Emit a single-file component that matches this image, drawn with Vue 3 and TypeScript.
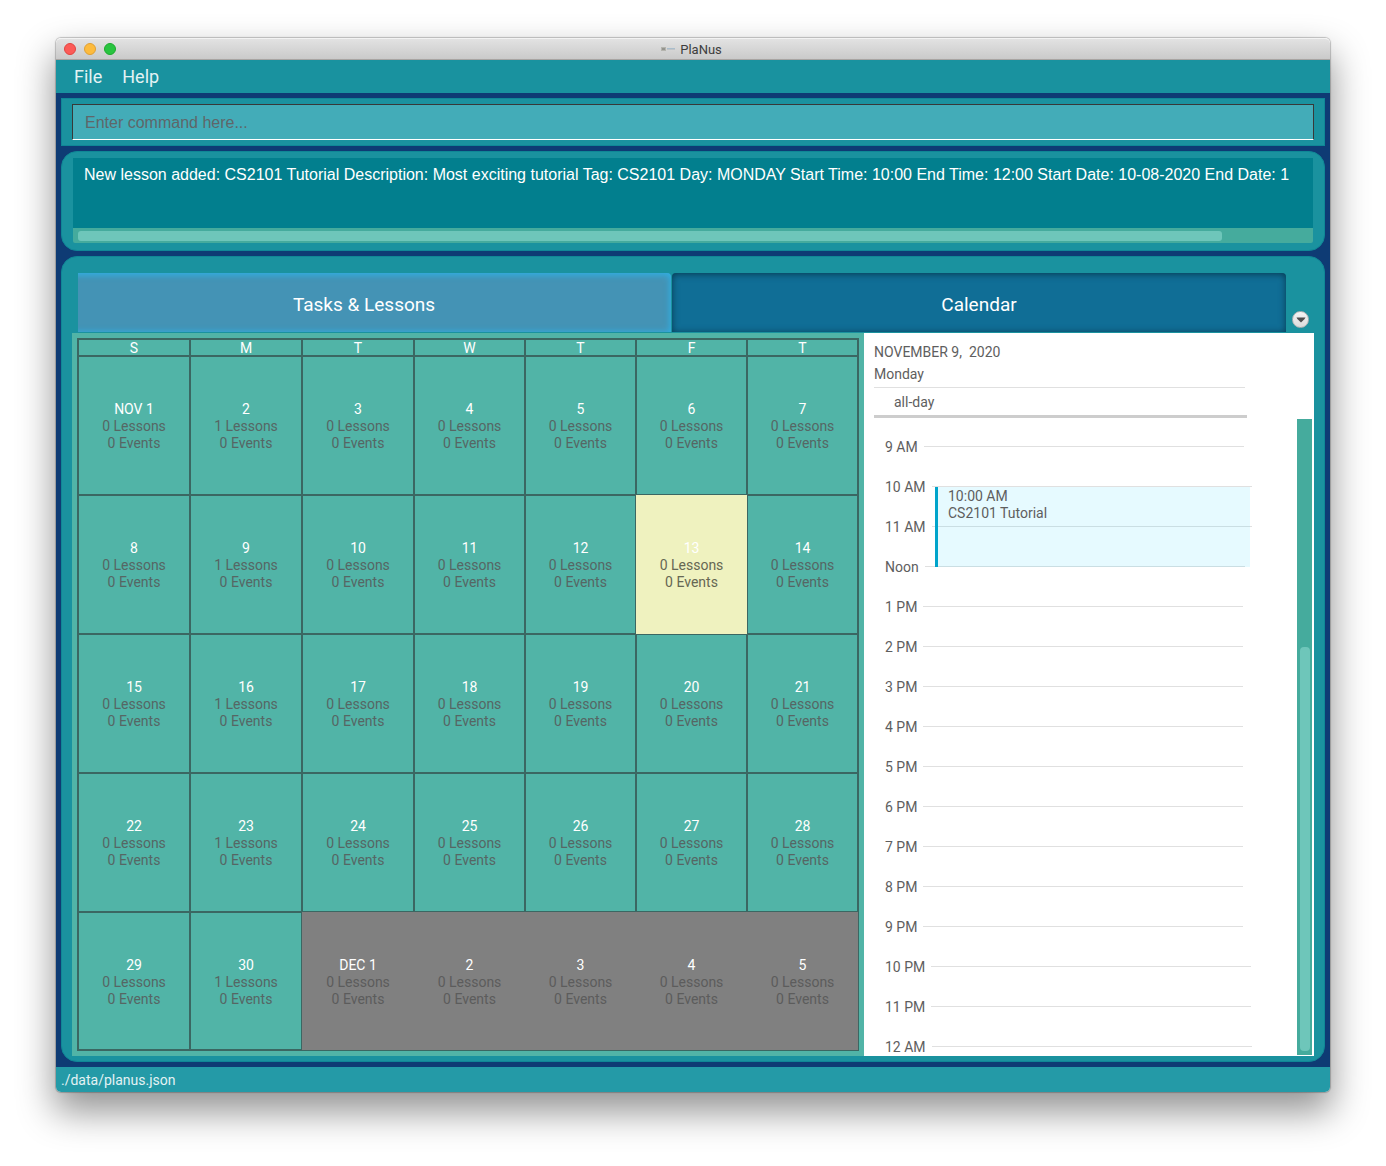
<script setup lang="ts">
import { ref } from 'vue'

interface Day {
  label: string
  lessons: number
  events: number
  outside: boolean
  today: boolean
}

const weekdays: string[] = ['S', 'M', 'T', 'W', 'T', 'F', 'T']

const weeks: Day[][] = Array.from({ length: 5 }, (_, week) =>
  Array.from({ length: 7 }, (_, column) => {
    const n = week * 7 + column + 1
    const outside = n > 30
    const date = outside ? n - 30 : n
    const month = outside ? 'DEC' : 'NOV'
    return {
      label: date === 1 ? `${month} 1` : String(date),
      lessons: column === 1 ? 1 : 0,
      events: 0,
      outside,
      today: n === 13,
    }
  }),
)

const hours: string[] = [
  '9 AM', '10 AM', '11 AM', 'Noon', '1 PM', '2 PM', '3 PM', '4 PM',
  '5 PM', '6 PM', '7 PM', '8 PM', '9 PM', '10 PM', '11 PM', '12 AM',
]

const command = ref('')
const result =
  'New lesson added: CS2101 Tutorial Description: Most exciting tutorial Tag: CS2101 Day: MONDAY Start Time: 10:00 End Time: 12:00 Start Date: 10-08-2020 End Date: 1'
</script>

<template>
  <div class="desktop">
    <div class="window">
      <header class="titlebar">
        <div class="lights">
          <button class="light close" aria-label="Close"></button>
          <button class="light minimise" aria-label="Minimise"></button>
          <button class="light zoom" aria-label="Zoom"></button>
        </div>
        <svg class="app-icon" viewBox="0 0 14 6" width="14" height="6" aria-hidden="true">
          <rect x="0" y="1" width="5" height="4" fill="#b4b4ae" />
          <rect x="1" y="2" width="3" height="2" fill="#94948e" />
          <rect x="6" y="2" width="8" height="1" fill="#a9bdcb" />
          <rect x="6" y="3" width="8" height="1" fill="#c0c4c8" />
        </svg>
        <span class="app-title">PlaNus</span>
      </header>

      <nav class="menubar">
        <button class="menu">File</button>
        <button class="menu">Help</button>
      </nav>

      <main class="body">
        <section class="panel command-panel">
          <input
            v-model="command"
            class="command"
            type="text"
            placeholder="Enter command here..."
            aria-label="Command"
          />
        </section>

        <section class="panel result-panel">
          <textarea class="result" readonly wrap="off" aria-label="Result" :value="result"></textarea>
          <div class="hscroll"><div class="hthumb"></div></div>
        </section>

        <section class="panel main-panel">
          <div class="tab-header">
            <div class="tabs" role="tablist">
              <button class="tab" role="tab" aria-selected="false">Tasks &amp; Lessons</button>
              <button class="tab selected" role="tab" aria-selected="true">Calendar</button>
            </div>
            <button class="tab-menu" aria-label="Show tabs">
              <svg viewBox="0 0 10 6" width="10" height="6" aria-hidden="true">
                <path d="M0.5 0.5H9.5L8.6 2L5 5.5L1.4 2Z" fill="#4d4d4d" />
              </svg>
            </button>
          </div>

          <div class="content">
            <div class="month">
              <table class="calendar">
                <thead>
                  <tr>
                    <th v-for="(name, i) in weekdays" :key="i" scope="col">{{ name }}</th>
                  </tr>
                </thead>
                <tbody>
                  <tr v-for="(week, w) in weeks" :key="w">
                    <td
                      v-for="day in week"
                      :key="day.label"
                      :class="{ outside: day.outside, today: day.today }"
                    >
                      <div class="date">{{ day.label }}</div>
                      <div>{{ day.lessons }} Lessons</div>
                      <div>{{ day.events }} Events</div>
                    </td>
                  </tr>
                </tbody>
              </table>
            </div>

            <div class="agenda">
              <div class="agenda-head">
                <div class="agenda-date">NOVEMBER 9,&nbsp; 2020</div>
                <div class="agenda-day">Monday</div>
                <div class="all-day">all-day</div>
              </div>
              <div class="agenda-body">
                <div class="hours">
                  <div v-for="hour in hours" :key="hour" class="hour">
                    <span>{{ hour }}</span>
                    <span class="rule"></span>
                  </div>
                  <div class="event">
                    <div>10:00 AM</div>
                    <div>CS2101 Tutorial</div>
                  </div>
                </div>
                <div class="vscroll"><div class="vthumb"></div></div>
              </div>
            </div>
          </div>
        </section>
      </main>

      <footer class="statusbar">./data/planus.json</footer>
    </div>
  </div>
</template>

<style>
body {
  margin: 0;
  background: #fff;
}
</style>

<style scoped>
.desktop {
  padding: 38px 56px 74px;
  font-family: Roboto, "Liberation Sans", sans-serif;
  font-size: 14px;
  line-height: 17px;
  overflow: hidden;
}

.desktop *,
.desktop *::before {
  box-sizing: border-box;
}

button {
  padding: 0;
  border: 0;
  background: none;
  font: inherit;
  color: inherit;
}

.window {
  border-radius: 5px;
  box-shadow: 0 0 1px 1px rgba(0, 0, 0, 0.22), 0 18px 36px 2px rgba(0, 0, 0, 0.42);
}

.titlebar {
  position: relative;
  display: flex;
  align-items: center;
  justify-content: center;
  gap: 5px;
  height: 22px;
  padding-right: 3px;
  border-radius: 5px 5px 0 0;
  border-top: 1px solid #f3f3f3;
  border-bottom: 1px solid #a8a4a2;
  background: linear-gradient(#e2e2e2, #cacaca);
  color: #3d3d3d;
  font-size: 13px;
}

.lights {
  position: absolute;
  left: 8px;
  display: flex;
  gap: 8px;
}

.light {
  width: 12px;
  height: 12px;
  border-radius: 50%;
  border: 1px solid;
}

.close {
  background: #fc5b57;
  border-color: #e2443f;
}

.minimise {
  background: #fdbb3d;
  border-color: #e0a033;
}

.zoom {
  background: #29c440;
  border-color: #1bab2c;
}

.menubar {
  display: flex;
  gap: 20px;
  height: 33px;
  padding: 0 18px;
  background: #19929f;
  color: #e3f2f4;
  font-size: 18px;
}

.body {
  display: flex;
  flex-direction: column;
  gap: 5px;
  padding: 5px;
  background: #0e3b74;
}

.panel {
  border: 1px solid #0f8796;
  background: #1a929f;
}

.command-panel {
  padding: 5px 10px;
}

.command {
  display: block;
  width: 100%;
  height: 36px;
  padding: 1px 12px 0;
  border: 1px solid #383838;
  border-bottom-color: #fff;
  border-radius: 0;
  background: #43acb8;
  color: #fff;
  font-family: "Liberation Sans", sans-serif;
  font-size: 16px;
  outline: none;
}

.command::placeholder {
  color: #5f6669;
  opacity: 1;
}

.result-panel {
  padding: 6px 11px 7px;
  border-radius: 16px;
}

.result {
  display: block;
  width: 100%;
  height: 70px;
  padding: 7px 0 0 11px;
  border: 0;
  background: #027f8e;
  color: #fff;
  font-family: "Liberation Sans", sans-serif;
  font-size: 16px;
  line-height: 20px;
  resize: none;
  overflow: hidden;
  outline: none;
}

.hscroll {
  padding: 3px 5px 2px;
  border-radius: 0 0 2px 2px;
  background: #45ab9d;
}

.hthumb {
  width: 93%;
  height: 10px;
  border-radius: 3px;
  background: #6ec6ba;
}

.main-panel {
  padding: 16px 10px 5px;
  border-radius: 16px;
}

.tab-header {
  display: flex;
  align-items: flex-end;
  gap: 6px;
  padding: 0 5px 1px 6px;
}

.tabs {
  flex: 1;
  display: flex;
  gap: 1px;
  height: 59px;
  overflow: hidden;
}

.tab {
  flex: 1;
  border-radius: 4px 4px 0 0;
  background: #4493b5;
  box-shadow: inset 0 1px 6px 1px #2eb1e6;
  color: #fff;
  font-size: 19px;
  padding-top: 4px;
}

.tab:first-child {
  margin-left: -21px;
}

.tab.selected {
  background: #106e96;
  box-shadow: inset 0 1px 7px 0 #07394f;
}

.tab-menu {
  display: flex;
  align-items: center;
  justify-content: center;
  width: 17px;
  height: 17px;
  margin-bottom: 4px;
  border-radius: 50%;
  border: 1px solid #b4b4b4;
  background: linear-gradient(#f4f4f4, #dcdcdc);
}

.content {
  display: grid;
  grid-template-columns: 792fr 450fr;
}

.month {
  padding: 5px;
  background: #51b4a7;
}

.calendar {
  width: 100%;
  table-layout: fixed;
  border-collapse: separate;
  border-spacing: 0;
  border: 1px solid #3b6762;
  color: #566664;
  text-align: center;
}

th,
td {
  padding: 0;
  border: 1px solid #3b6762;
}

th {
  height: 17px;
  padding-top: 1px;
  line-height: 14px;
  color: #fff;
  font-weight: 400;
}

th:nth-child(-n + 3) {
  width: 112px;
}

td {
  height: 139px;
  padding-top: 2px;
}

tr:last-child td {
  height: 138px;
}

.date {
  color: #fff;
}

.today {
  border-color: transparent;
  background: #eff2bf;
  color: #666753;
}

.outside {
  border-color: transparent;
  background: #808080;
  color: #5c5c5c;
}

.agenda {
  display: flex;
  flex-direction: column;
  background: #fff;
  color: #5e5e5e;
}

.agenda-head {
  width: 373px;
  margin-left: 10px;
  padding-top: 8px;
  border-bottom: 3px solid #cdcdcd;
  line-height: 22px;
}

.agenda-day {
  height: 25px;
  margin-right: 2px;
  border-bottom: 1px solid #e0e0e0;
}

.all-day {
  padding: 3px 20px 2px;
}

.agenda-body {
  flex: 1 0 0;
  min-height: 0;
  display: flex;
  justify-content: space-between;
  padding: 1px 2px 1px 0;
}

.hours {
  position: relative;
  flex: 1;
  padding: 8px 0 0 21px;
  overflow: hidden;
}

.hour {
  display: flex;
  align-items: center;
  gap: 6px;
  height: 40px;
}

.rule {
  width: 320px;
  height: 1px;
  margin-bottom: 1px;
  background: #e0e0e0;
}

.event {
  position: absolute;
  top: 68px;
  left: 71px;
  width: 315px;
  height: 80px;
  padding: 1px 0 0 10px;
  border-left: 3px solid #00a4cb;
  background: rgba(5, 205, 255, 0.1);
}

.vscroll {
  display: flex;
  flex-direction: column;
  justify-content: flex-end;
  width: 15px;
  padding: 0 2px 4px 3px;
  background: #45ab9d;
}

.vthumb {
  height: 64%;
  border-radius: 4px;
  background: #6ec6ba;
}

.statusbar {
  padding: 5px 5px 3px;
  border-radius: 0 0 5px 5px;
  background: #249aa7;
  color: #e3f2f4;
}
</style>
